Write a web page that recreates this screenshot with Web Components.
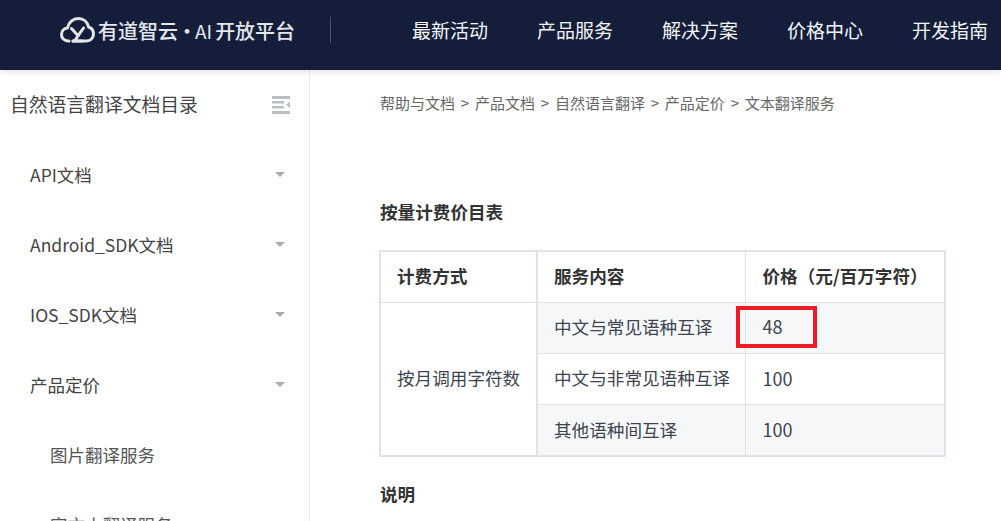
<!DOCTYPE html>
<html lang="zh">
<head>
<meta charset="utf-8">
<title>文本翻译服务</title>
<style>
  html, body { margin: 0; height: 100%; overflow: hidden; background: #fff; }
  body { font-family: "Noto Sans CJK SC", "Liberation Sans", sans-serif; color: #333; }
  .layout { display: flex; height: 451px; }
</style>
</head>
<body>
<app-header></app-header>
<div class="layout">
  <side-nav title="自然语言翻译文档目录">
    <nav-item caret>API文档</nav-item>
    <nav-item caret>Android_SDK文档</nav-item>
    <nav-item caret>IOS_SDK文档</nav-item>
    <nav-item caret>产品定价</nav-item>
    <nav-item sub>图片翻译服务</nav-item>
    <nav-item sub>定文本翻译服务</nav-item>
  </side-nav>
  <doc-content></doc-content>
</div>
<script>
class AppHeader extends HTMLElement {
  constructor() {
    super();
    this.attachShadow({ mode: "open" }).innerHTML = `
      <style>
        :host { display: flex; align-items: center; box-sizing: border-box; height: 70px; padding-bottom: 10px; background: #141e3a; color: #fff; box-shadow: 0 2px 6px rgba(20,30,58,.12); position: relative; }
        .logo { display: flex; align-items: center; margin-left: 60px; width: 270px; height: 26px; border-right: 1px solid #4b5368; color: #e4e6ea; font-size: 20px; font-weight: 500; white-space: nowrap; }
        .logo svg { margin-right: 3px; flex: none; }
        .dot { margin: 0 -2px 0 -1px; }
        .ai { font-size: 19px; margin-right: 3px; font-weight: 400; }
        nav { display: flex; gap: 49px; margin: -2px 0 0 81px; font-size: 19px; color: #f4f5f7; white-space: nowrap; }
      </style>
      <div class="logo">
        <svg width="35" height="26" viewBox="0 0 35 26" fill="none" stroke="#e4e6ea" stroke-width="3" stroke-linecap="round" stroke-linejoin="round">
          <path d="M9 24H8C4.300 24 1.500 21 1.500 17.500C1.500 14 4 11.300 7.500 11C8.500 5.500 13 1.500 18.500 1.500C23.500 1.500 27.500 5 28.500 10C31.500 11 33.500 14 33.500 17C33.500 21 30.500 24 26.500 24H13"/>
          <path d="M11.500 11.500L17 17.500M23.500 11L14.500 24M13 24H22"/>
        </svg>
        <span>有道智云</span><span class="dot">·</span><span class="ai">AI</span><span>开放平台</span>
      </div>
      <nav><span>最新活动</span><span>产品服务</span><span>解决方案</span><span>价格中心</span><span>开发指南</span></nav>`;
  }
}

class SideNav extends HTMLElement {
  constructor() {
    super();
    this.attachShadow({ mode: "open" }).innerHTML = `
      <style>
        :host { display: block; flex: none; box-sizing: border-box; width: 310px; border-right: 1px solid #e8e8e8; overflow: hidden; }
        .top { display: flex; align-items: center; justify-content: space-between; box-sizing: border-box; height: 70px; padding: 0 19px 4px 10px; font-size: 18.800px; color: #444; }
        .top svg { margin-top: 4px; }
      </style>
      <div class="top">
        <span>${this.getAttribute("title")}</span>
        <svg width="18" height="18" viewBox="0 0 18 18" fill="#b9bdc4">
          <rect y="0" width="18" height="3"/>
          <rect y="5" width="12" height="2.500"/>
          <rect y="10" width="12" height="2.500"/>
          <rect y="15" width="18" height="3"/>
          <path d="M18 5.500V12L14 8.750Z"/>
        </svg>
      </div>
      <slot></slot>`;
  }
}

class NavItem extends HTMLElement {
  constructor() {
    super();
    this.attachShadow({ mode: "open" }).innerHTML = `
      <style>
        :host { display: flex; align-items: center; justify-content: space-between; box-sizing: border-box; height: 70px; padding: 0 24px 2px 30px; font-size: 17.500px; color: #444; white-space: nowrap; }
        :host([sub]) { padding-left: 50px; color: #555; }
        i { display: none; width: 0; height: 0; border: 5.500px solid transparent; border-top: 5px solid #a9adb3; border-bottom: 0; }
        :host([caret]) i { display: block; }
      </style>
      <span><slot></slot></span><i></i>`;
  }
}

class DocContent extends HTMLElement {
  constructor() {
    super();
    this.attachShadow({ mode: "open" }).innerHTML = `
      <style>
        :host { display: block; flex: 1; padding-left: 70px; overflow: hidden; }
        .crumbs { display: flex; gap: 5.800px; box-sizing: border-box; height: 70px; padding-bottom: 5px; align-items: center; font-size: 15px; color: #666; white-space: nowrap; }
        h3 { margin: 0; font-size: 17.600px; font-weight: 700; color: #333; line-height: 24px; }
        .first { margin-top: 60px; margin-bottom: 26px; }
        .last { margin-top: 25px; }
      </style>
      <div class="crumbs"><span>帮助与文档</span><span>&gt;</span><span>产品文档</span><span>&gt;</span><span>自然语言翻译</span><span>&gt;</span><span>产品定价</span><span>&gt;</span><span>文本翻译服务</span></div>
      <h3 class="first">按量计费价目表</h3>
      <price-table></price-table>
      <h3 class="last">说明</h3>`;
  }
}

class PriceTable extends HTMLElement {
  constructor() {
    super();
    this.attachShadow({ mode: "open" }).innerHTML = `
      <style>
        :host { display: block; width: 566px; margin-left: -1px; }
        table { border-collapse: collapse; width: 567px; table-layout: fixed; font-size: 17.600px; color: #3d4450; border: 2px solid #dfe2e7; }
        td, th { border: 1px solid #dfe2e7; padding: 0 16px 3px 17px; box-sizing: border-box; height: 51px; text-align: left; white-space: nowrap; }
        th { font-weight: 700; color: #333; }
        .c1 { border-right: 2px solid #dfe2e7; padding-left: 16px; }
        .c2 { padding-left: 16px; }
        tbody tr:nth-child(odd) td.s { background: #f5f7f9; }
        tbody tr:nth-child(2) td { padding-bottom: 2px; }
        tbody tr:nth-child(3) td { height: 52px; padding-bottom: 1px; }
        tbody td.c1 { padding-bottom: 3px; }
        td.mark { position: relative; }
        td.mark b { position: absolute; left: -10px; top: 3px; width: 73px; height: 34px; border: 4px solid #ed1c24; }
        .num { font-size: 18px; }
      </style>
      <table>
        <colgroup><col style="width:157px"><col style="width:208px"><col></colgroup>
        <thead><tr><th class="c1">计费方式</th><th class="c2">服务内容</th><th>价格（元/百万字符）</th></tr></thead>
        <tbody>
          <tr><td class="c1" rowspan="3">按月调用字符数</td><td class="s c2">中文与常见语种互译</td><td class="s mark num">48<b></b></td></tr>
          <tr><td class="c2">中文与非常见语种互译</td><td class="num">100</td></tr>
          <tr><td class="s c2">其他语种间互译</td><td class="s num">100</td></tr>
        </tbody>
      </table>`;
  }
}

customElements.define("app-header", AppHeader);
customElements.define("side-nav", SideNav);
customElements.define("nav-item", NavItem);
customElements.define("doc-content", DocContent);
customElements.define("price-table", PriceTable);
</script>
</body>
</html>
